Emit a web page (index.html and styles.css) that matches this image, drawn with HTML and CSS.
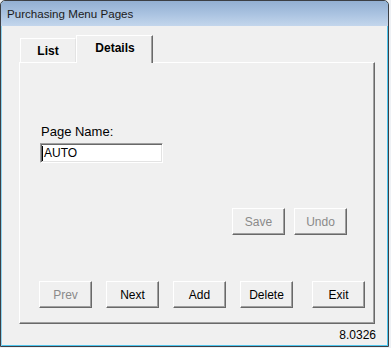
FILE: index.html
```html
<!DOCTYPE html>
<html lang="en">
<head>
    <meta charset="UTF-8">
    <meta name="viewport" content="width=device-width, initial-scale=1.0">
    <title>Purchasing Menu Pages</title>
    <link rel="stylesheet" href="styles.css">
</head>
<body>

    <div class="window">
        <div class="titlebar">Purchasing Menu Pages</div>

        <!-- Tab strip -->
        <div class="tabs">
            <div class="tab">List</div>
            <div class="tab active">Details</div>
        </div>

        <!-- Details page -->
        <div class="panel">
            <div class="field">
                <label class="field-label" for="pageName">Page Name:</label>
                <div class="textbox" id="pageName"><span class="caret"></span><span>AUTO</span></div>
            </div>

            <div class="actions">
                <button class="btn" disabled>Save</button>
                <button class="btn" disabled>Undo</button>
            </div>

            <div class="nav">
                <button class="btn" disabled>Prev</button>
                <button class="btn">Next</button>
                <button class="btn">Add</button>
                <button class="btn">Delete</button>
                <button class="btn exit">Exit</button>
            </div>
        </div>

        <div class="status">8.0326</div>
    </div>

</body>
</html>
```

FILE: styles.css
```css
/* General Styles */
html {
    background: #eef1f5;
}

body {
    margin: 0;
    padding: 0;
    font-family: "Liberation Sans", Arial, sans-serif;
    font-size: 12px;
    color: #000;
}

.window {
    width: 389px;
    height: 347px;
    box-sizing: border-box;
    border: 1px solid #3c3f44;
    border-radius: 5px 5px 0 0;
    background-color: #f0f0f0;
    box-shadow: inset 1px 0 #8ed3ef, inset -1px 0 #4fc6ee, inset 0 -1px #4fc6ee;
    overflow: hidden;
}

.titlebar {
    height: 25px;
    line-height: 25px;
    padding-left: 6px;
    font-size: 11.6px;
    color: #1b1b1b;
    background: linear-gradient(to bottom, #93afd2 0%, #a9c2e0 50%, #c3d6ec 100%);
    border-radius: 4px 4px 0 0;
}

/* Tabs */
.tabs {
    display: flex;
    align-items: flex-end;
    height: 27px;
    margin-top: 9px;
    padding-left: 19px;
}

.tab {
    width: 56px;
    height: 24px;
    box-sizing: border-box;
    padding-top: 5px;
    border-top: 1px solid #fff;
    border-left: 1px solid #fff;
    border-right: 1px solid #e3e3e3;
    font-weight: bold;
    line-height: 14px;
    text-align: center;
}

.tab.active {
    position: relative;
    z-index: 1;
    width: 77px;
    height: 28px;
    margin-bottom: -1px;
    padding-top: 5px;
    padding-left: 1px;
    border-right: 1px solid #696969;
    box-shadow: inset -1px 0 #a0a0a0;
    background-color: #f0f0f0;
}

/* Panel */
.panel {
    width: 356px;
    height: 262px;
    box-sizing: border-box;
    margin-left: 18px;
    border: 1px solid;
    border-color: #fff #696969 #696969 #fff;
    box-shadow: inset -1px -1px #a0a0a0;
}

.field {
    padding-top: 61px;
    padding-left: 20px;
}

.field-label {
    display: block;
    margin-left: 1px;
    font-size: 13px;
    line-height: 15px;
}

.textbox {
    display: flex;
    align-items: center;
    width: 123px;
    height: 20px;
    box-sizing: border-box;
    margin-top: 4px;
    border: 1px solid;
    border-color: #a0a0a0 #fff #fff #a0a0a0;
    box-shadow: inset 1px 1px #696969, inset -1px -1px #e3e3e3;
    background-color: #fff;
    font-size: 12px;
}

.caret {
    width: 1px;
    height: 15px;
    margin-left: 1px;
    margin-right: 1px;
    background-color: #000;
}

.actions {
    display: flex;
    justify-content: flex-end;
    gap: 9px;
    margin-top: 45px;
    padding-right: 27px;
}

.nav {
    display: flex;
    gap: 14px;
    margin-top: 46px;
    padding-left: 19px;
}

.nav .exit {
    margin-left: 5px;
}

/* Buttons */
.btn {
    width: 53px;
    height: 27px;
    box-sizing: border-box;
    padding: 0;
    border: 1px solid;
    border-color: #fff #696969 #696969 #fff;
    box-shadow: inset -1px -1px #a0a0a0;
    background-color: #f0f0f0;
    font-family: "Liberation Sans", Arial, sans-serif;
    font-size: 12px;
    color: #000;
}

.btn:disabled {
    color: #8a8a8a;
}

.status {
    margin-top: 4px;
    padding-right: 12px;
    line-height: 14px;
    text-align: right;
}
```
